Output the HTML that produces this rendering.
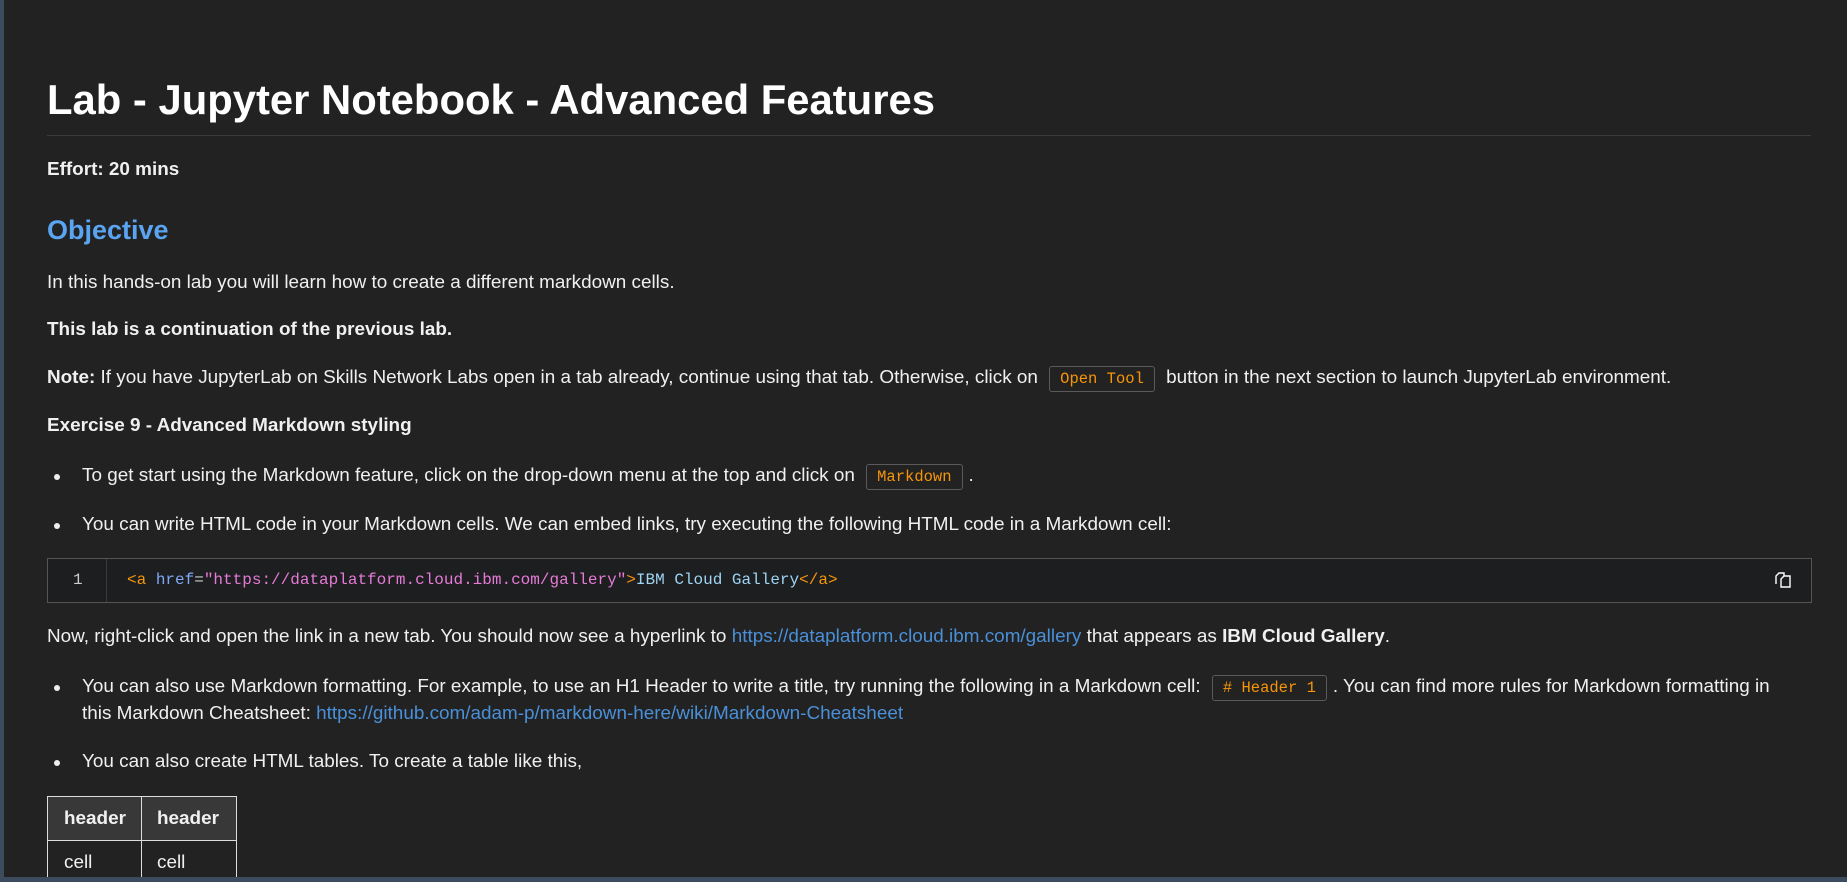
<!DOCTYPE html>
<html><head><meta charset="utf-8"><style>
html,body{margin:0;padding:0;width:1847px;height:882px;overflow:hidden;background:#222222;}
body{font-family:"Liberation Sans",sans-serif;color:#f0f0f0;font-size:18.9px;position:relative;}
.l{position:absolute;left:47px;white-space:nowrap;line-height:24px;}
b{font-weight:bold;}
.code{font-family:"Liberation Mono",monospace;font-size:15.5px;color:#f7950a;border:1px solid #5a5a5a;border-radius:3px;padding:3px 10px;margin:0 6px;}
a{color:#4a90d9;text-decoration:none;}
.bul{position:absolute;left:54px;width:6px;height:6px;border-radius:50%;background:#eee;}
</style></head><body>
<div style="position:absolute;left:0;top:0;width:4px;height:882px;background:#3d4b5f"></div>
<div class="l" style="top:76px;font-size:41.8px;font-weight:bold;line-height:48px;color:#fff">Lab - Jupyter Notebook - Advanced Features</div>
<div style="position:absolute;left:47px;top:135px;width:1764px;height:1px;background:#3a3a3a"></div>
<div class="l" style="top:158px;font-weight:bold">Effort: 20 mins</div>
<div class="l" style="top:213px;font-size:27px;line-height:34px;font-weight:bold;color:#5ba4f2">Objective</div>
<div class="l" style="top:271px">In this hands-on lab you will learn how to create a different markdown cells.</div>
<div class="l" style="top:318px;font-weight:bold">This lab is a continuation of the previous lab.</div>
<div class="l" style="top:366px"><b>Note:</b> If you have JupyterLab on Skills Network Labs open in a tab already, continue using that tab. Otherwise, click on <span class="code">Open Tool</span> button in the next section to launch JupyterLab environment.</div>
<div class="l" style="top:414px;font-weight:bold">Exercise 9 - Advanced Markdown styling</div>
<div class="bul" style="top:474px"></div>
<div class="l" style="left:82px;top:464px">To get start using the Markdown feature, click on the drop-down menu at the top and click on <span class="code">Markdown</span>.</div>
<div class="bul" style="top:523px"></div>
<div class="l" style="left:82px;top:513px">You can write HTML code in your Markdown cells. We can embed links, try executing the following HTML code in a Markdown cell:</div>
<div style="position:absolute;left:47px;top:558px;width:1763px;height:43px;border:1px solid #555;background:#1d1e20"></div>
<div style="position:absolute;left:106px;top:559px;width:1px;height:43px;background:#3a3a3a"></div>
<div class="l" style="left:73px;top:568px;font-family:'Liberation Mono',monospace;font-size:16px;color:#ccc">1</div>
<div class="l" style="left:127px;top:568px;font-family:'Liberation Mono',monospace;font-size:16px"><span style="color:#f7950a">&lt;a</span> <span style="color:#7fa7f5">href</span><span style="color:#ccc">=</span><span style="color:#e67ad6">"https://dataplatform.cloud.ibm.com/gallery"</span><span style="color:#f7950a">&gt;</span><span style="color:#9fd4f5">IBM Cloud Gallery</span><span style="color:#f7950a">&lt;/a&gt;</span></div>
<svg style="position:absolute;left:1773px;top:571px" width="20" height="18" viewBox="0 0 20 18" fill="none" stroke="#fff" stroke-width="1.4"><path d="M3 13V5l3-3h5v3"/><path d="M8 16V8l3-3h6v11z"/></svg>
<div class="l" style="top:625px">Now, right-click and open the link in a new tab. You should now see a hyperlink to <a>https://dataplatform.cloud.ibm.com/gallery</a> that appears as <b>IBM Cloud Gallery</b>.</div>
<div class="bul" style="top:685px"></div>
<div class="l" style="left:82px;top:675px">You can also use Markdown formatting. For example, to use an H1 Header to write a title, try running the following in a Markdown cell: <span class="code"># Header 1</span>. You can find more rules for Markdown formatting in</div>
<div class="l" style="left:82px;top:702px">this Markdown Cheatsheet: <a>https://github.com/adam-p/markdown-here/wiki/Markdown-Cheatsheet</a></div>
<div class="bul" style="top:760px"></div>
<div class="l" style="left:82px;top:750px">You can also create HTML tables. To create a table like this,</div>
<div style="position:absolute;left:47px;top:796px;width:188px;height:90px;border:1px solid #ddd;border-bottom:none"></div>
<div style="position:absolute;left:48px;top:797px;width:188px;height:43px;background:#383838"></div>
<div style="position:absolute;left:47px;top:840px;width:189px;height:1px;background:#ddd"></div>
<div style="position:absolute;left:141px;top:796px;width:1px;height:90px;background:#ddd"></div>
<div class="l" style="left:64px;top:807px;font-weight:bold">header</div>
<div class="l" style="left:157px;top:807px;font-weight:bold">header</div>
<div class="l" style="left:64px;top:851px">cell</div>
<div class="l" style="left:157px;top:851px">cell</div>
<div style="position:absolute;left:0;top:877px;width:1847px;height:5px;background:#3d4b5f"></div>
</body></html>
